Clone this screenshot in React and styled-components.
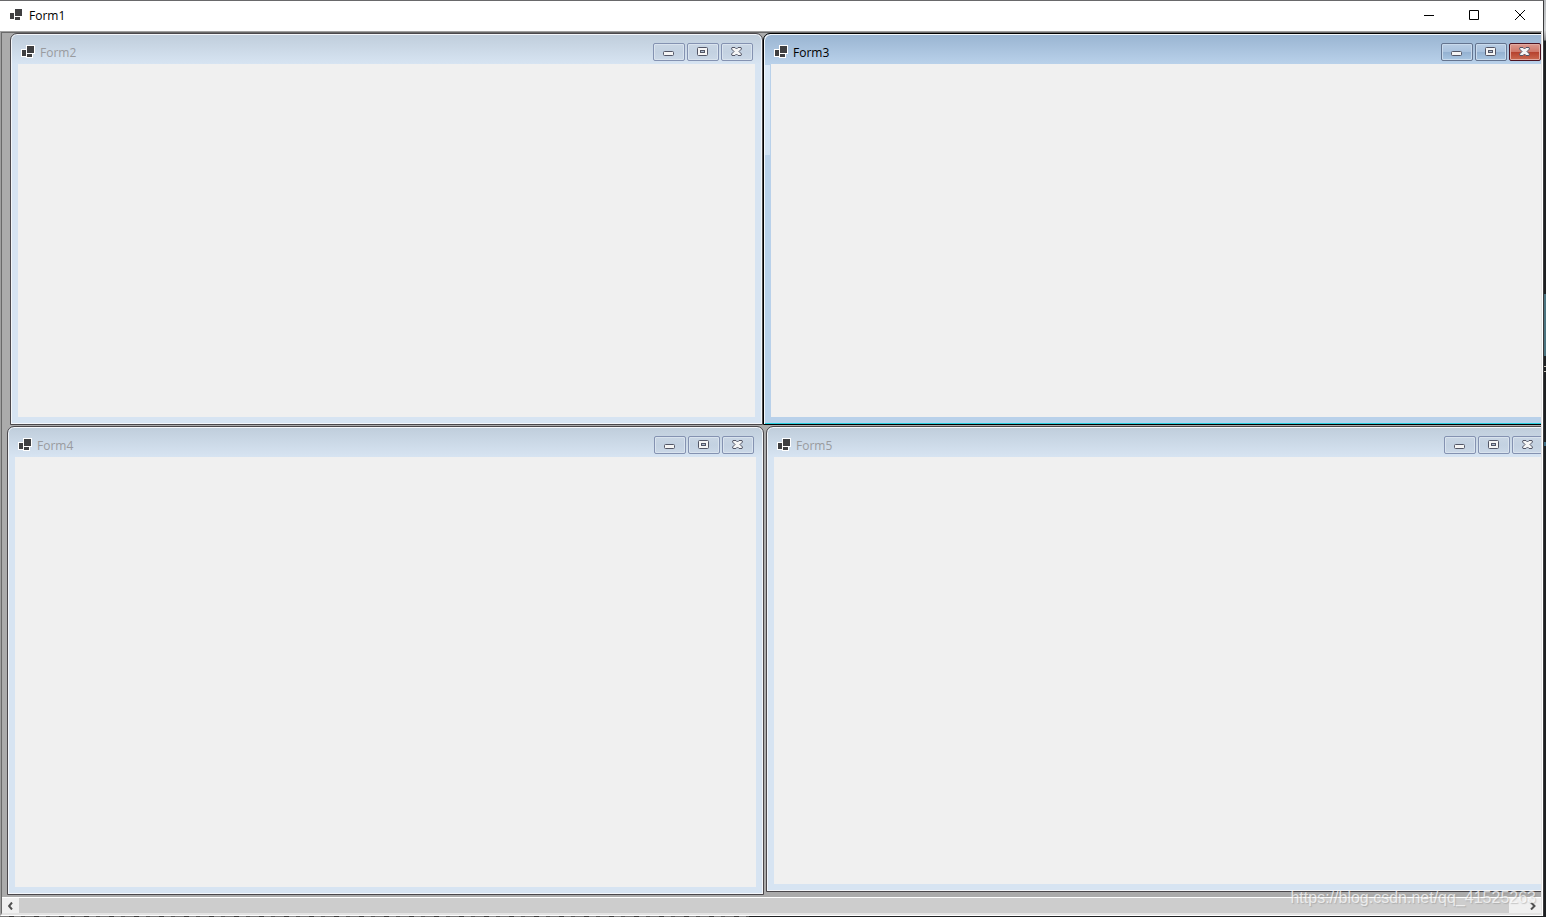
import React from "react";
import styled, { createGlobalStyle, css } from "styled-components";

const GlobalStyle = createGlobalStyle`
  * { box-sizing: border-box; }
  html, body, #root { height: 100%; }
  body {
    margin: 0;
    overflow: hidden;
    background: #232323;
    font-family: "Open Sans", "Noto Sans", sans-serif;
    font-size: 12px;
    line-height: 16px;
  }
  button { margin: 0; padding: 0; border: 0; background: none; font: inherit; color: inherit; }
`;

const Desktop = styled.div`
  position: relative;
  height: 100%;
  padding: 0 2px 1px 0;
  background:
    linear-gradient(#b4b7ba, #d0d2d4 30px, #8a8c8e 40px, transparent 41px) right top / 2px 41px no-repeat,
    linear-gradient(#4b7480, #4b7480) right 294px / 2px 62px no-repeat,
    linear-gradient(#c9c4b8, #c9c4b8) right 366px / 2px 1px no-repeat,
    linear-gradient(#c9c4b8, #c9c4b8) right 371px / 2px 1px no-repeat,
    linear-gradient(#3f6f86, #3f6f86) right 442px / 2px 4px no-repeat,
    repeating-linear-gradient(90deg, #777 0 9px, #3c3c3c 9px 14px, #888 14px 21px, #555 21px 25px) left bottom / 749px 1px no-repeat,
    #1d2022;
`;

const MainWindow = styled.main`
  display: flex;
  flex-direction: column;
  height: 100%;
  border-top: 1px solid #69696b;
  border-right: 1px solid #3a3a3c;
  background: #fff;
`;

const MainTitleBar = styled.header`
  display: flex;
  align-items: center;
  height: 30px;
  flex: none;
  padding: 0 0 2px 8px;
`;

const Title = styled.h1`
  flex: 1;
  margin: 0;
  font-size: 12px;
  line-height: 16px;
  font-weight: 400;
  color: ${(p) => (p.$muted ? "#999b9f" : "#000")};
`;

const MainTitle = styled(Title)`
  padding: 2px 0 0 5px;
`;

const SystemButton = styled.button`
  display: flex;
  align-items: center;
  justify-content: center;
  width: 46px;
  height: 28px;
`;

const Client = styled.div`
  flex: 1;
  min-height: 0;
  display: flex;
  flex-direction: column;
  margin-right: 1px;
  border-style: solid;
  border-width: 1px;
  border-color: #a0a0a0 #e3e3e3 #fff #a0a0a0;
`;

const ClientInner = styled.div`
  flex: 1;
  min-height: 0;
  display: flex;
  flex-direction: column;
  border-style: solid;
  border-width: 1px 0 2px 1px;
  border-color: #696969 #e3e3e3 #e3e3e3 #696969;
`;

const Workspace = styled.section`
  position: relative;
  flex: 1;
  min-height: 0;
  overflow: hidden;
  background: #ababab;
`;

const ChildWindow = styled.article`
  position: absolute;
  display: flex;
  flex-direction: column;
  left: ${(p) => p.$place.left}px;
  top: ${(p) => p.$place.top}px;
  ${(p) => (p.$place.width ? `width: ${p.$place.width}px;` : `right: ${p.$place.right}px;`)}
  ${(p) => (p.$place.height ? `height: ${p.$place.height}px;` : `bottom: ${p.$place.bottom}px;`)}
  border: 1px solid #4a474b;
  border-radius: 7px 7px 0 0;
  padding: 0 7px 7px;
  ${(p) =>
    p.$active
      ? css`
          z-index: 1;
          border-color: #000;
          box-shadow: inset 1px 1px 0 #f4f8fc, inset 0 -1px 0 #27d0e0;
          background:
            linear-gradient(#dbe8f6, #d0e1f3) 0 31px / 6px 90px no-repeat,
            linear-gradient(#99b4d1, #b9d1ea 30px, #b9d1ea);
        `
      : css`
          box-shadow: inset 0 0 0 1px #f3f6fa;
          background: linear-gradient(#bfcddb, #d7e4f2 30px, #d7e4f2);
        `}
`;

const ChildTitleBar = styled.header`
  display: flex;
  align-items: center;
  height: 30px;
  flex: none;
  padding: 6px 2px 0;
`;

const ChildTitle = styled(Title).attrs({ as: "h2" })`
  padding: 1px 0 0 4px;
`;

const ChildBody = styled.div`
  flex: 1;
  min-height: 0;
  background: #f0f0f0;
`;

const Buttons = styled.div`
  display: flex;
  gap: 2px;
  flex: none;
`;

const tones = {
  inactive: { edge: "#8492b1", fill: "linear-gradient(#c9d6e4, #c3d1e1 50%, #cbd8e7)", light: "#d9e3ee" },
  active: { edge: "#64748f", fill: "linear-gradient(#b9cde4, #a9c2de 48%, #93b0d0 50%, #a9c6e2)", light: "#c9daec" },
  danger: { edge: "#4c1220", fill: "linear-gradient(#dc9a90, #cf7768 48%, #b5402c 50%, #cb6a50)", light: "#e2aaa0" },
};

const CaptionButton = styled.button`
  && {
    display: flex;
    align-items: center;
    justify-content: center;
    width: 32px;
    height: 18px;
    border: 1px solid ${(p) => tones[p.$tone].edge};
    border-radius: 2px;
    box-shadow: inset 0 0 0 1px ${(p) => tones[p.$tone].light};
    background: ${(p) => tones[p.$tone].fill};
  }
`;

const ScrollBar = styled.div`
  display: flex;
  flex: none;
  height: 16px;
  border-top: 1px solid #fff;
  background: #f0f0f0;
`;

const ScrollButton = styled.button`
  display: flex;
  align-items: center;
  justify-content: center;
  width: 17px;
  height: 15px;
  flex: none;
`;

const ScrollTrack = styled.div`
  flex: 1;
  padding-right: 15px;
`;

const ScrollThumb = styled.div`
  height: 100%;
  background: #cdcdcd;
`;

const Watermark = styled.span`
  position: absolute;
  right: 10px;
  bottom: 9px;
  z-index: 2;
  font: 16px/20px "Liberation Sans", Arial, sans-serif;
  color: rgba(255, 255, 255, 0.7);
  text-shadow: 1px 1px 1px rgba(120, 120, 120, 0.35);
  pointer-events: none;
`;

const AppIcon = ({ outlined }) => (
  <svg width="16" height="16" viewBox="0 0 16 16" shapeRendering="crispEdges" aria-hidden="true">
    {outlined && <path fill="#fff" d="M6 1h9v9h-2v4H6v-1H1V5h5z" />}
    <path fill="#3f3f41" d="M2 6h4v6H2zM7 2h7v7H7zM7 10h5v3H7z" />
  </svg>
);

const glyphs = {
  minimize: (
    <svg width="12" height="10" viewBox="0 0 12 10" aria-hidden="true">
      <rect x="0.5" y="4.5" width="10" height="4" rx="1" fill="#f5f5f5" stroke="#535666" />
    </svg>
  ),
  restore: (
    <svg width="12" height="10" viewBox="0 0 12 10" aria-hidden="true">
      <rect x="0.5" y="0.5" width="10" height="8" rx="1" fill="#f5f5f5" stroke="#535666" />
      <rect x="3.5" y="3.5" width="4" height="2" fill="#aebdd0" stroke="#535666" />
    </svg>
  ),
  close: (
    <svg width="12" height="10" viewBox="0 0 12 10" aria-hidden="true">
      <path
        d="M1 .5H4L5.500 2 7 .5h3L10.500 2 8 4.500l2.500 2.500L10 8.500H7L5.500 7 4 8.500H1L.5 7 3 4.500.5 2z"
        fill="#f5f5f5"
        stroke="#535666"
      />
    </svg>
  ),
};

const childWindows = [
  { title: "Form2", place: { left: 8, top: 0, width: 753, height: 392 } },
  { title: "Form3", active: true, place: { left: 761, top: 0, right: -10, height: 392 } },
  { title: "Form4", place: { left: 5, top: 393, width: 757, bottom: 2 } },
  { title: "Form5", place: { left: 764, top: 393, right: -13, bottom: 5 } },
];

function MdiChild({ title, active, place }) {
  const tone = active ? "active" : "inactive";
  return (
    <ChildWindow $active={active} $place={place} aria-label={title}>
      <ChildTitleBar>
        <AppIcon outlined />
        <ChildTitle $muted={!active}>{title}</ChildTitle>
        <Buttons>
          <CaptionButton $tone={tone} aria-label={`Minimize ${title}`}>{glyphs.minimize}</CaptionButton>
          <CaptionButton $tone={tone} aria-label={`Maximize ${title}`}>{glyphs.restore}</CaptionButton>
          <CaptionButton $tone={active ? "danger" : tone} aria-label={`Close ${title}`}>{glyphs.close}</CaptionButton>
        </Buttons>
      </ChildTitleBar>
      <ChildBody />
    </ChildWindow>
  );
}

export default function App() {
  return (
    <>
      <GlobalStyle />
      <Desktop>
        <MainWindow>
          <MainTitleBar>
            <AppIcon />
            <MainTitle>Form1</MainTitle>
            <SystemButton aria-label="Minimize">
              <svg width="12" height="10" viewBox="0 0 12 10"><path d="M2 5.500h10" stroke="#000" /></svg>
            </SystemButton>
            <SystemButton aria-label="Maximize">
              <svg width="10" height="10" viewBox="0 0 10 10"><path d="M.5.5h9v9h-9z" fill="none" stroke="#000" /></svg>
            </SystemButton>
            <SystemButton aria-label="Close">
              <svg width="10" height="10" viewBox="0 0 10 10"><path d="M0 0l10 10M10 0L0 10" stroke="#000" /></svg>
            </SystemButton>
          </MainTitleBar>
          <Client>
            <ClientInner>
              <Workspace>
                {childWindows.map((w) => (
                  <MdiChild key={w.title} {...w} />
                ))}
              </Workspace>
              <ScrollBar>
                <ScrollButton aria-label="Scroll left">
                  <svg width="6" height="8" viewBox="0 0 6 8"><path d="M4 .5L1 4 4 7.500" fill="none" stroke="#505050" strokeWidth="2" /></svg>
                </ScrollButton>
                <ScrollTrack>
                  <ScrollThumb />
                </ScrollTrack>
                <ScrollButton aria-label="Scroll right">
                  <svg width="6" height="8" viewBox="0 0 6 8"><path d="M1 .5L4.500 4 1 7.500" fill="none" stroke="#505050" strokeWidth="2" /></svg>
                </ScrollButton>
              </ScrollBar>
            </ClientInner>
          </Client>
        </MainWindow>
        <Watermark>https://blog.csdn.net/qq_41525263</Watermark>
      </Desktop>
    </>
  );
}
